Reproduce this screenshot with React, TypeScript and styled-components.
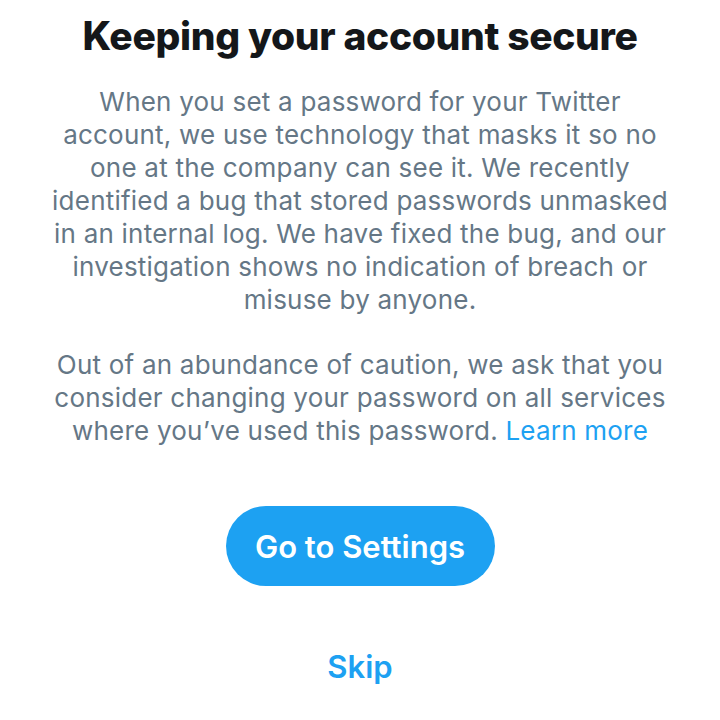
import React from "react";
import styled, { createGlobalStyle } from "styled-components";

const Global = createGlobalStyle`
  html, body { margin: 0; padding: 0; background: #ffffff; }
  body { font-family: Inter, "Noto Sans", sans-serif; -webkit-font-smoothing: antialiased; }
`;

const Page = styled.main`
  width: 720px;
  height: 720px;
  display: flex;
  flex-direction: column;
  align-items: center;
  padding-top: 12px;
  box-sizing: border-box;
  overflow: hidden;
`;

const Title = styled.h1`
  margin: 0;
  font-size: 39px;
  line-height: 48px;
  font-weight: 800;
  color: #14171a;
  letter-spacing: -0.35px;
  text-align: center;
`;

const Body = styled.p<{ $top?: number }>`
  margin: ${(p) => p.$top ?? 0}px 0 0;
  font-size: 26px;
  line-height: 33px;
  font-weight: 400;
  letter-spacing: 0.22px;
  color: #657786;
  text-align: center;
  white-space: nowrap;
`;

const Link = styled.a`
  color: #1da1f2;
  text-decoration: none;
`;

const PrimaryButton = styled.button`
  margin-top: 59px;
  width: 269px;
  height: 80px;
  border: none;
  border-radius: 40px;
  background: #1da1f2;
  color: #ffffff;
  font-family: Inter, "Noto Sans", sans-serif;
  font-size: 31px;
  font-weight: 600;
  cursor: pointer;
`;

const TextButton = styled.button`
  margin-top: 62px;
  border: none;
  background: none;
  color: #1da1f2;
  font-family: Inter, "Noto Sans", sans-serif;
  font-size: 31px;
  font-weight: 600;
  padding: 0;
  cursor: pointer;
`;

export default function App() {
  return (
    <>
      <Global />
      <Page>
        <Title>Keeping your account secure</Title>
        <Body $top={25}>
          When you set a password for your Twitter
          <br />
          account, we use technology that masks it so no
          <br />
          one at the company can see it. We recently
          <br />
          identified a bug that stored passwords unmasked
          <br />
          in an internal log. We have fixed the bug, and our
          <br />
          investigation shows no indication of breach or
          <br />
          misuse by anyone.
        </Body>
        <Body $top={32}>
          Out of an abundance of caution, we ask that you
          <br />
          consider changing your password on all services
          <br />
          where you’ve used this password. <Link href="#">Learn more</Link>
        </Body>
        <PrimaryButton>Go to Settings</PrimaryButton>
        <TextButton>Skip</TextButton>
      </Page>
    </>
  );
}
